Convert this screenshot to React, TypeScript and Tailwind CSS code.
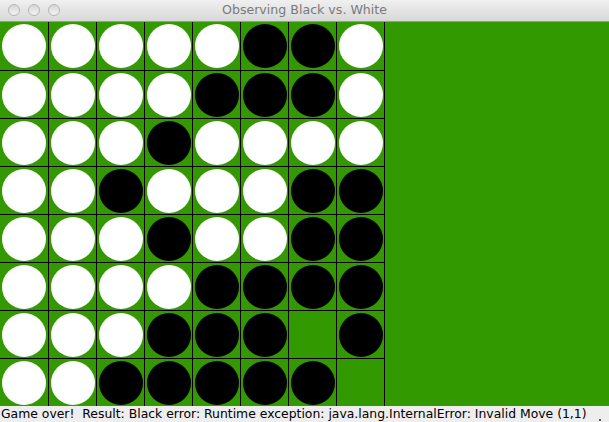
import React from "react";

const BOARD = [
  "WWWWWBBW",
  "WWWWBBBW",
  "WWWBWWWW",
  "WWBWWWBB",
  "WWWBWWBB",
  "WWWWBBBB",
  "WWWBBB.B",
  "WWBBBBB.",
];

function Cell({ v }: { v: string }) {
  return (
    <div className="bg-[#339900] flex items-center justify-center">
      {v === "W" && <div className="w-[44px] h-[44px] rounded-full bg-white" />}
      {v === "B" && <div className="w-[44px] h-[44px] rounded-full bg-black" />}
    </div>
  );
}

export default function App() {
  return (
    <div className="w-[609px] h-[422px] flex flex-col overflow-hidden bg-[#339900]" style={{ fontFamily: '"DejaVu Sans", Verdana, sans-serif' }}>
      <div className="relative h-[22px] shrink-0 bg-gradient-to-b from-[#f0f0f0] to-[#d8d8d8] border-b border-[#9a9a9a] flex items-center justify-center">
        <div className="absolute left-[8px] top-[4px] flex gap-[8px]">
          <div className="w-[12px] h-[12px] rounded-full border border-[#b5b5b5] bg-gradient-to-b from-[#d6d6d6] to-[#f4f4f4]" />
          <div className="w-[12px] h-[12px] rounded-full border border-[#b5b5b5] bg-gradient-to-b from-[#d6d6d6] to-[#f4f4f4]" />
          <div className="w-[12px] h-[12px] rounded-full border border-[#b5b5b5] bg-gradient-to-b from-[#d6d6d6] to-[#f4f4f4]" />
        </div>
        <span className="text-[12.6px] text-[#7a7a7a] leading-none">Observing Black vs. White</span>
      </div>
      <div className="flex-1 flex">
        <div className="grid gap-px bg-black pr-px grid-cols-[48px_repeat(7,47px)] grid-rows-[48px_repeat(7,47px)] w-[385px] h-[384px]">
          {BOARD.flatMap((row, r) =>
            row.split("").map((v, c) => <Cell key={`${r}-${c}`} v={v} />)
          )}
        </div>
        <div className="flex-1 bg-[#339900]" />
      </div>
      <div className="relative h-[16px] shrink-0 bg-[#eeeeee] text-[12.4px] leading-[16px] text-black pl-[1px] whitespace-nowrap">
        Game over!&nbsp; Result: Black error: Runtime exception: java.lang.InternalError: Invalid Move (1,1)
        <div className="absolute right-[8px] bottom-[1px] w-[2px] h-[2px] bg-[#555]" />
      </div>
    </div>
  );
}
